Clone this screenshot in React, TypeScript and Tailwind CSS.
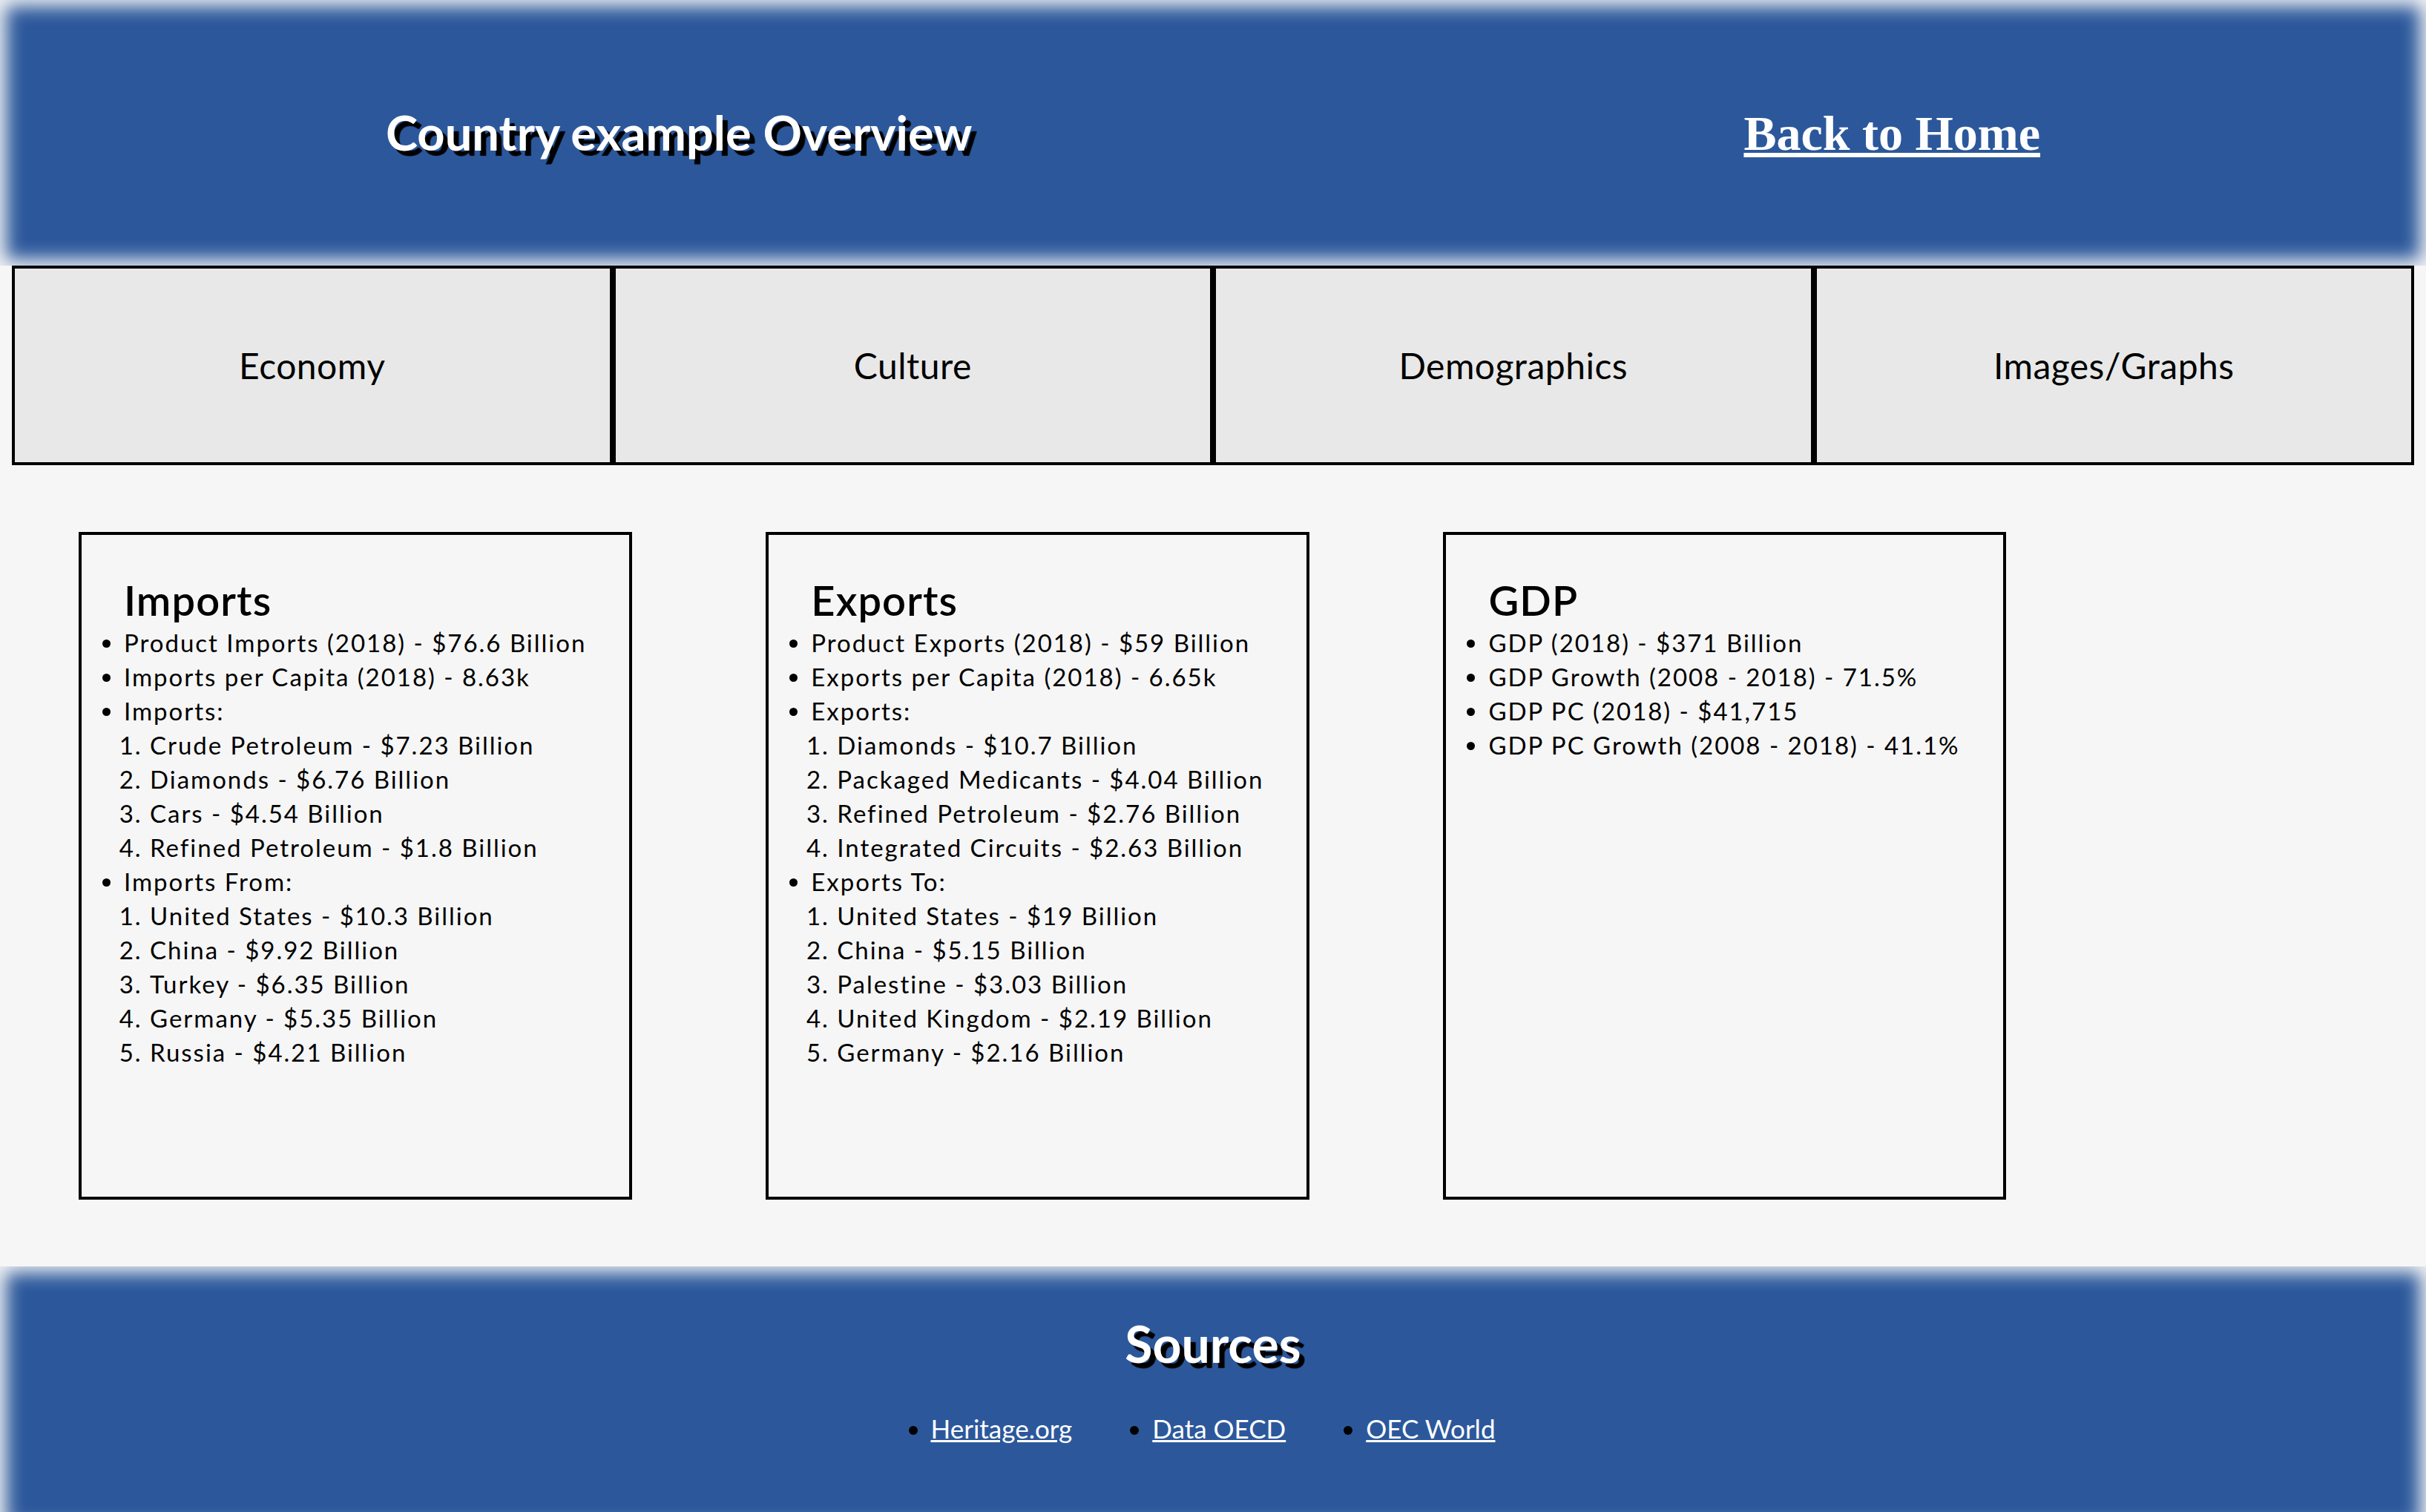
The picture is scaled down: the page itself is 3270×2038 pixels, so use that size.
import React from 'react';

type Entry = string | { label: string; items: string[] };

const cards: { title: string; entries: Entry[] }[] = [
    {
        title: 'Imports',
        entries: [
            'Product Imports (2018) - $76.6 Billion',
            'Imports per Capita (2018) - 8.63k',
            {
                label: 'Imports:',
                items: [
                    'Crude Petroleum - $7.23 Billion',
                    'Diamonds - $6.76 Billion',
                    'Cars - $4.54 Billion',
                    'Refined Petroleum - $1.8 Billion',
                ],
            },
            {
                label: 'Imports From:',
                items: [
                    'United States - $10.3 Billion',
                    'China - $9.92 Billion',
                    'Turkey - $6.35 Billion',
                    'Germany - $5.35 Billion',
                    'Russia - $4.21 Billion',
                ],
            },
        ],
    },
    {
        title: 'Exports',
        entries: [
            'Product Exports (2018) - $59 Billion',
            'Exports per Capita (2018) - 6.65k',
            {
                label: 'Exports:',
                items: [
                    'Diamonds - $10.7 Billion',
                    'Packaged Medicants - $4.04 Billion',
                    'Refined Petroleum - $2.76 Billion',
                    'Integrated Circuits - $2.63 Billion',
                ],
            },
            {
                label: 'Exports To:',
                items: [
                    'United States - $19 Billion',
                    'China - $5.15 Billion',
                    'Palestine - $3.03 Billion',
                    'United Kingdom - $2.19 Billion',
                    'Germany - $2.16 Billion',
                ],
            },
        ],
    },
    {
        title: 'GDP',
        entries: [
            'GDP (2018) - $371 Billion',
            'GDP Growth (2008 - 2018) - 71.5%',
            'GDP PC (2018) - $41,715',
            'GDP PC Growth (2008 - 2018) - 41.1%',
        ],
    },
];

const tabs = ['Economy', 'Culture', 'Demographics', 'Images/Graphs'];
const sources = ['Heritage.org', 'Data OECD', 'OEC World'];

export default function App() {
    return (
        <div className="min-h-screen bg-[#f6f6f6] text-black font-['Lato','Open_Sans',sans-serif]">
            {/* Header */}
            <header className="h-[358px] bg-[#2c589b] shadow-[inset_0_0_24px_8px_#f6f6f6] flex items-center justify-around">
                <h1 className="text-[65px] font-bold text-white leading-tight [text-shadow:7px_7px_1px_#000]">
                    Country example Overview
                </h1>
                <a
                    href="#"
                    className="text-[66px] font-bold text-white underline font-['Liberation_Serif','Times_New_Roman',serif]"
                >
                    Back to Home
                </a>
            </header>

            {/* Tabs */}
            <nav className="px-4 grid grid-cols-4">
                {tabs.map((t) => (
                    <div
                        key={t}
                        className="h-[269px] border-4 border-black bg-[#e8e8e8] flex items-center justify-center text-[48px] tracking-[0.01em]"
                    >
                        {t}
                    </div>
                ))}
            </nav>

            {/* Cards */}
            <main className="flex items-start gap-[180px] pl-[106px] py-[90px]">
                {cards.map((c) => (
                    <section
                        key={c.title}
                        className="h-[900px] border-4 border-black pl-[57px] pr-[58px] pt-[58px]"
                    >
                        <h2 className="text-[56px] font-semibold leading-[60px] mb-1 tracking-[0.02em]">{c.title}</h2>
                        <ul className="list-disc text-[33px] leading-[46px] tracking-[0.06em]">
                            {c.entries.map((e, i) =>
                                typeof e === 'string' ? (
                                    <li key={i}>{e}</li>
                                ) : (
                                    <li key={i}>
                                        {e.label}
                                        <ol className="list-decimal pl-[35px]">
                                            {e.items.map((it) => (
                                                <li key={it}>{it}</li>
                                            ))}
                                        </ol>
                                    </li>
                                )
                            )}
                        </ul>
                    </section>
                ))}
            </main>

            {/* Footer */}
            <footer className="h-[358px] bg-[#2c589b] shadow-[inset_0_0_24px_8px_#f6f6f6] flex flex-col items-center pt-[63px]">
                <h2 className="text-[68px] font-bold text-white leading-[1.2] [text-shadow:7px_7px_1px_#000]">
                    Sources
                </h2>
                <ul className="flex gap-[108px] mt-[52px] list-disc text-[35px] leading-[42px]">
                    {sources.map((s) => (
                        <li key={s}>
                            <a href="#" className="text-white underline">
                                {s}
                            </a>
                        </li>
                    ))}
                </ul>
            </footer>
        </div>
    );
}
